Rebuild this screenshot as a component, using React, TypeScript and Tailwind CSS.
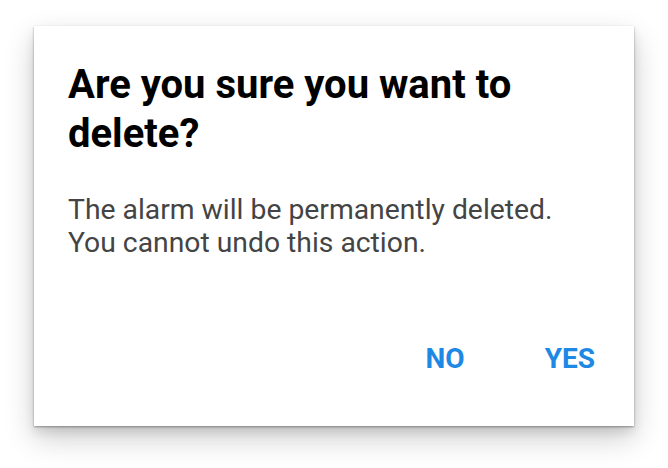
export default function App() {
  return (
    <div
      className="w-[668px] h-[468px] bg-white flex justify-center pt-[26px]"
      style={{ fontFamily: "Roboto, 'Liberation Sans', sans-serif" }}
    >
      <div className="w-[600px] h-[400px] bg-white flex flex-col px-[34px] shadow-[0_1px_2px_rgba(0,0,0,0.35),0_12px_28px_rgba(0,0,0,0.2),0_6px_10px_rgba(0,0,0,0.1)]">
        <h2 className="mt-[34px] text-[40px] leading-[49px] font-bold text-black">
          Are you sure you want to delete?
        </h2>
        <p className="mt-[35px] text-[28.3px] leading-[33px] text-[#444444]">
          The alarm will be permanently deleted.
          <br />
          You cannot undo this action.
        </p>
        <div className="mt-auto mb-[46px] flex justify-end gap-[80px] pr-[5px]">
          <button className="text-[28px] font-bold text-[#1e88e5]">NO</button>
          <button className="text-[28px] font-bold text-[#1e88e5]">YES</button>
        </div>
      </div>
    </div>
  );
}
